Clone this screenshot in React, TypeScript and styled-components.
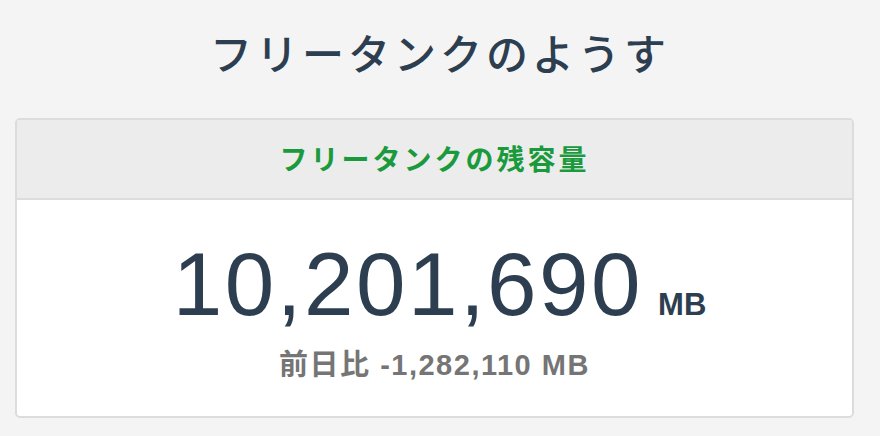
import styled, { createGlobalStyle } from "styled-components";

const GlobalStyle = createGlobalStyle`
  html, body {
    margin: 0;
    padding: 0;
    background: #f4f4f4;
  }
  body {
    font-family: "Liberation Sans", "Noto Sans CJK JP", sans-serif;
  }
`;

const Page = styled.div`
  padding: 0 15px;
  box-sizing: border-box;
  width: 880px;
`;

const Title = styled.h1`
  margin: 0;
  height: 118px;
  display: flex;
  align-items: center;
  justify-content: center;
  padding-bottom: 16px;
  box-sizing: border-box;
  font-family: "Noto Sans CJK JP", sans-serif;
  font-weight: 500;
  font-size: 42px;
  letter-spacing: 4px;
  color: #2c3e50;
`;

const Card = styled.section`
  border: 2px solid #dcdcdc;
  border-radius: 5px;
  background: #fff;
  overflow: hidden;
  width: 839px;
  box-sizing: border-box;
`;

const CardHeader = styled.header`
  height: 80px;
  background: #ececec;
  border-bottom: 2px solid #dcdcdc;
  box-sizing: border-box;
  display: flex;
  align-items: center;
  justify-content: center;
  padding-bottom: 2px;
  font-family: "Noto Sans CJK JP", sans-serif;
  font-weight: 700;
  font-size: 28px;
  letter-spacing: 3px;
  color: #1a9a3c;
`;

const CardBody = styled.div`
  height: 216px;
  display: flex;
  flex-direction: column;
  align-items: center;
  padding-top: 40px;
  box-sizing: border-box;
`;

const Amount = styled.div`
  display: flex;
  align-items: baseline;
  gap: 15px;
  margin-left: 10px;
  color: #2c3e50;
  line-height: 1;
`;

const Value = styled.span`
  font-size: 89px;
  font-weight: 400;
  letter-spacing: 2.5px;
`;

const Unit = styled.span`
  font-size: 31px;
  font-weight: 700;
`;

const Diff = styled.div`
  margin-top: 12px;
  font-size: 29px;
  font-weight: 700;
  letter-spacing: 1.5px;
  color: #757575;
`;

export default function App() {
  return (
    <>
      <GlobalStyle />
      <Page>
        <Title>フリータンクのようす</Title>
        <Card>
          <CardHeader>フリータンクの残容量</CardHeader>
          <CardBody>
            <Amount>
              <Value>10,201,690</Value>
              <Unit>MB</Unit>
            </Amount>
            <Diff>前日比 -1,282,110 MB</Diff>
          </CardBody>
        </Card>
      </Page>
    </>
  );
}
